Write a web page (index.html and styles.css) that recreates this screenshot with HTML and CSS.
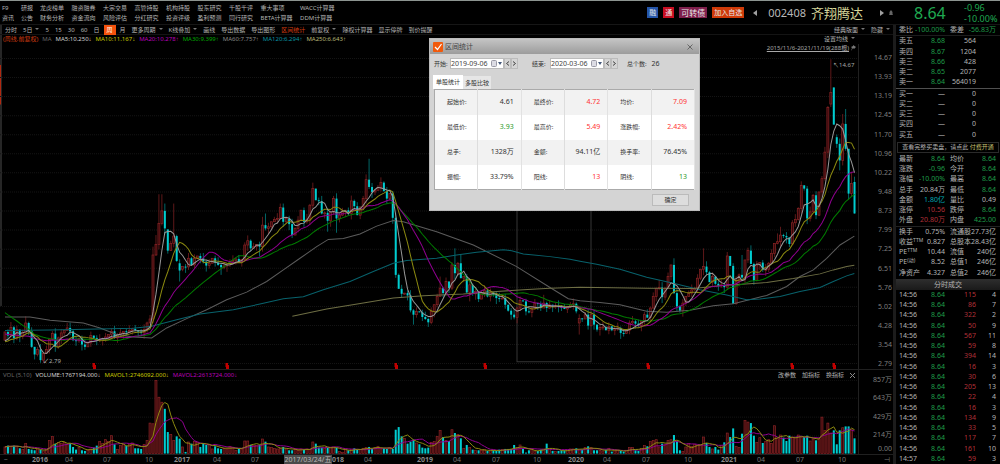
FILE: index.html
```html
<!DOCTYPE html>
<html lang="zh-CN">
<head>
<meta charset="utf-8">
<title>齐翔腾达 002408</title>
<link rel="stylesheet" href="styles.css">
</head>
<body>
<div class="app">
  <header class="header">
    <nav class="menu">
      <a href="#">F9</a><a href="#">研报</a><a href="#">龙虎榜单</a><a href="#">融资融券</a><a href="#">大宗交易</a><a href="#">高管持股</a><a href="#">机构持股</a><a href="#">股东研究</a><a href="#">千股千评</a><a href="#">重大事项</a><a href="#">WACC计算器</a>
      <a href="#">资讯</a><a href="#">公告</a><a href="#">财务分析</a><a href="#">资金流向</a><a href="#">风险评估</a><a href="#">分红研究</a><a href="#">投资评级</a><a href="#">盈利预测</a><a href="#">同行研究</a><a href="#">BETA计算器</a><a href="#">DDM计算器</a>
    </nav>
    <div class="stock">
      <span class="tag tag-blue">融</span>
      <span class="tag tag-red">通</span>
      <span class="tag tag-plum">可转债</span>
      <button class="tag tag-orange">加入自选</button>
      <button class="arrow" aria-label="上一只"><svg width="4" height="6" viewBox="0 0 4 6"><path d="M4 0v6L0 3z"/></svg></button>
      <span class="code">002408</span>
      <h1 class="name">齐翔腾达</h1>
      <button class="arrow next" aria-label="下一只"><svg width="4" height="6" viewBox="0 0 4 6"><path d="M0 0v6l4-3z"/></svg></button>
      <button class="arrow bell" aria-label="提醒"><svg width="4" height="6" viewBox="0 0 4 6"><path d="M2 0l1.5 2v2l.5 1H0l.5-1V2z"/></svg></button>
    </div>
    <div class="price">
      <strong class="last">8.64</strong>
      <span class="change"><span>-0.96</span><span>-10.00%</span></span>
    </div>
  </header>

  <main class="main">
    <div class="toolbar">
      <button>分时</button><button class="drop">5日</button><button>5</button><button>15</button><button>30</button><button>60</button><button>日</button><button class="active">周</button><button>月</button><button class="drop">更多周期</button><button class="drop">K线叠加</button><button>画线</button><button>导出数据</button><button>导出图形</button><button class="hot">区间统计</button><button class="drop">前复权</button><button>除权计算器</button><button>显示停牌</button><button>到价提醒</button>
      <span class="toolbar-end"><button class="drop">经典版面</button><button class="drop">隐藏</button></span>
    </div>
    <div class="panel">
      <div class="legend">
        <span class="c-hot">(周线,前复权)</span><span class="c-dim">MA</span><span class="c-white">MA5:10.250<i>↓</i></span><span class="c-yellow">MA10:11.167<i>↓</i></span><span class="c-magenta">MA20:10.278<i>↑</i></span><span class="c-green">MA30:9.399<i>↑</i></span><span class="c-grey">MA60:7.757<i>↑</i></span><span class="c-cyan">MA120:6.294<i>↑</i></span><span class="c-cream">MA250:6.643<i>↑</i></span>
        <button class="drop setting">设置均线</button>
      </div>
      <div class="plot price-plot">
        <svg class="canvas" id="price" viewBox="0 0 2574 981" preserveAspectRatio="none"></svg>
        <div class="axis price-axis">
          <span>14.67</span><span>13.93</span><span>13.19</span><span>12.45</span><span>11.70</span><span>10.96</span><span>10.22</span><span>9.48</span><span>8.73</span><span>7.99</span><span>7.25</span><span>6.51</span><span>5.76</span><span>5.02</span><span>4.28</span><span>3.54</span><span>2.79</span>
        </div>
        <svg class="notes" id="notes"></svg>
        <a class="period" href="#">2015/11/6-2021/11/19(288根)</a>
        <svg class="pin" width="5" height="6" viewBox="0 0 5 6"><path d="M2 0l3 2-1 1-1 1-1-1-2 3 1-3-1-1 2-1z"/></svg>
      </div>
      <div class="plot volume-plot">
        <div class="volume-area">
          <div class="legend volume-legend">
            <span class="c-dim">VOL (5,10)</span><span class="c-white">VOLUME:1767194.000<i>↓</i></span><span class="c-yellow">MAVOL1:2746092.000<i>↓</i></span><span class="c-magenta">MAVOL2:2613724.000<i>↓</i></span>
            <span class="indicator-actions"><button>改参数</button><button>加指标</button><button>换指标</button><button aria-label="关闭"><svg width="5" height="5" viewBox="0 0 5 5"><path d="M0 0l5 5M5 0L0 5"/></svg></button></span>
          </div>
          <svg class="canvas" id="volume" viewBox="0 0 2574 222" preserveAspectRatio="none"></svg>
        </div>
        <div class="axis volume-axis"><span>857万</span><span>643万</span><span>429万</span><span>214万</span><span>0.00</span></div>
      </div>
      <svg class="timeline" id="timeline"></svg>
    </div>
  </main>

  <aside class="side">
    <dl class="pairs r1">
      <div><dt>委比</dt><dd class="dn">-100.00%</dd></div><div><dt>委差</dt><dd class="dn">-56.83万</dd></div>
    </dl>
    <div class="book r5">
      <table>
        <tr><th>卖五</th><td class="dn">8.68</td><td>564</td></tr>
        <tr><th>卖四</th><td class="dn">8.67</td><td>1204</td></tr>
        <tr><th>卖三</th><td class="dn">8.66</td><td>428</td></tr>
        <tr><th>卖二</th><td class="dn">8.65</td><td>2077</td></tr>
        <tr><th>卖一</th><td class="dn">8.64</td><td>564019</td></tr>
      </table>
    </div>
    <div class="book buys r5">
      <table>
        <tr><th>买一</th><td>—</td><td>0</td></tr>
        <tr><th>买二</th><td>—</td><td>0</td></tr>
        <tr><th>买三</th><td>—</td><td>0</td></tr>
        <tr><th>买四</th><td>—</td><td>0</td></tr>
        <tr><th>买五</th><td>—</td><td>0</td></tr>
      </table>
    </div>
    <p class="promo">查看完整买卖盘，请点此 <a href="#">付费开通</a></p>
    <dl class="pairs r7">
      <div><dt>最新</dt><dd class="dn">8.64</dd></div><div><dt>均价</dt><dd class="dn">8.64</dd></div>
      <div><dt>涨跌</dt><dd class="dn">-0.96</dd></div><div><dt>今开</dt><dd class="dn">8.64</dd></div>
      <div><dt>涨幅</dt><dd class="dn">-10.00%</dd></div><div><dt>最高</dt><dd class="dn">8.64</dd></div>
      <div><dt>总手</dt><dd>20.84万</dd></div><div><dt>最低</dt><dd class="dn">8.64</dd></div>
      <div><dt>金额</dt><dd class="amount">1.80亿</dd></div><div><dt>量比</dt><dd>0.49</dd></div>
      <div><dt>涨停</dt><dd class="up">10.56</dd></div><div><dt>跌停</dt><dd class="dn">8.64</dd></div>
      <div><dt>外盘</dt><dd class="up">20.80万</dd></div><div><dt>内盘</dt><dd class="dn">425.00</dd></div>
    </dl>
    <dl class="pairs ruled r5">
      <div><dt>换手</dt><dd>0.75%</dd></div><div><dt>流通股</dt><dd>27.73亿</dd></div>
      <div><dt>收益<sup>TTM</sup></dt><dd>0.827</dd></div><div><dt>总股本</dt><dd>28.43亿</dd></div>
      <div><dt>PE<sup>TTM</sup></dt><dd>10.44</dd></div><div><dt>流值</dt><dd>240亿</dd></div>
      <div><dt>PE<sup>(动)</sup></dt><dd>8.52</dd></div><div><dt>总值1</dt><dd>246亿</dd></div>
      <div><dt>净资产</dt><dd>4.327</dd></div><div><dt>总值2</dt><dd>246亿</dd></div>
    </dl>
    <h2 class="side-title">分时成交</h2>
    <div class="book trades r17">
      <table>
        <tr><th>14:56</th><td class="dn">8.64</td><td class="up">115</td><td>4</td></tr>
        <tr><th>14:56</th><td class="dn">8.64</td><td class="up">86</td><td>7</td></tr>
        <tr><th>14:56</th><td class="dn">8.64</td><td class="up">322</td><td>2</td></tr>
        <tr><th>14:56</th><td class="dn">8.64</td><td class="up">50</td><td>9</td></tr>
        <tr><th>14:56</th><td class="dn">8.64</td><td class="up">567</td><td>11</td></tr>
        <tr><th>14:56</th><td class="dn">8.64</td><td class="up">59</td><td>8</td></tr>
        <tr><th>14:56</th><td class="dn">8.64</td><td class="up">394</td><td>14</td></tr>
        <tr><th>14:56</th><td class="dn">8.64</td><td class="up">16</td><td>3</td></tr>
        <tr><th>14:56</th><td class="dn">8.64</td><td class="up">30</td><td>6</td></tr>
        <tr><th>14:56</th><td class="dn">8.64</td><td class="up">205</td><td>13</td></tr>
        <tr><th>14:56</th><td class="dn">8.64</td><td class="up">22</td><td>4</td></tr>
        <tr><th>14:56</th><td class="dn">8.64</td><td class="up">16</td><td>3</td></tr>
        <tr><th>14:56</th><td class="dn">8.64</td><td class="up">134</td><td>9</td></tr>
        <tr><th>14:56</th><td class="dn">8.64</td><td class="up">33</td><td>5</td></tr>
        <tr><th>14:56</th><td class="dn">8.64</td><td class="up">117</td><td>7</td></tr>
        <tr><th>14:56</th><td class="dn">8.64</td><td class="up">161</td><td>10</td></tr>
        <tr><th>14:57</th><td class="dn">8.64</td><td class="up">59</td><td>3</td></tr>
      </table>
    </div>
  </aside>

  <section class="dialog" role="dialog" aria-labelledby="dialog-title">
    <div class="dialog-bar">
      <svg width="10" height="10" viewBox="0 0 10 10"><rect width="10" height="10" rx="1" fill="#f25a0c"/><path d="M2 5l2.500 2.500L8.500 2" fill="none" stroke="#fff" stroke-width="1.200"/></svg>
      <h2 id="dialog-title">区间统计</h2>
      <button class="close" aria-label="关闭"><svg width="6" height="6" viewBox="0 0 6 6"><path d="M.5 .5l5 5M5.500 .5l-5 5"/></svg></button>
    </div>
    <div class="range">
      <label for="from">开始:</label>
      <span class="date"><input id="from" value="2019-09-06"><svg width="11" height="7" viewBox="0 0 11 7"><rect x=".5" y=".5" width="5" height="6" rx="1" fill="#dcdce4" stroke="#9a9aa6"/><path d="M7 2h4L9 5z" fill="#44587a"/></svg></span>
      <button aria-label="前一周"><svg width="3" height="5" viewBox="0 0 3 5"><path d="M3 .5L.5 2.500 3 4.500"/></svg></button><button aria-label="后一周"><svg width="3" height="5" viewBox="0 0 3 5"><path d="M0 .5l2.500 2L0 4.500"/></svg></button>
      <label class="to" for="to">结束:</label>
      <span class="date"><input id="to" value="2020-03-06"><svg width="11" height="7" viewBox="0 0 11 7"><rect x=".5" y=".5" width="5" height="6" rx="1" fill="#dcdce4" stroke="#9a9aa6"/><path d="M7 2h4L9 5z" fill="#44587a"/></svg></span>
      <button aria-label="前一周"><svg width="3" height="5" viewBox="0 0 3 5"><path d="M3 .5L.5 2.500 3 4.500"/></svg></button><button aria-label="后一周"><svg width="3" height="5" viewBox="0 0 3 5"><path d="M0 .5l2.500 2L0 4.500"/></svg></button>
      <span class="count">总个数:</span><span>26</span>
    </div>
    <div class="tabs" role="tablist"><button role="tab" aria-selected="true">单股统计</button><button role="tab" aria-selected="false">多股比较</button></div>
    <table class="stats">
      <tr><th>起始价:</th><td>4.61</td><th>最终价:</th><td class="up">4.72</td><th>均价:</th><td class="up">7.09</td></tr>
      <tr><th>最低价:</th><td class="dn">3.93</td><th>最高价:</th><td class="up">5.49</td><th>涨跌幅:</th><td class="up">2.42%</td></tr>
      <tr><th>总手:</th><td>1328万</td><th>金额:</th><td>94.11亿</td><th>换手率:</th><td>76.45%</td></tr>
      <tr><th>振幅:</th><td>33.79%</td><th>阳线:</th><td class="up">13</td><th>阴线:</th><td class="dn">13</td></tr>
    </table>
    <div class="dialog-foot"><button>确定</button></div>
  </section>
</div>
<script src="chart.js"></script>
</body>
</html>
```

FILE: styles.css
```css
* { box-sizing: border-box; }
body {
  margin: 0;
  background: #000;
  color: #b4b4b4;
  font: 7px/10px "Noto Sans", "Noto Sans CJK SC", sans-serif;
}
button, input { font: inherit; color: inherit; background: none; border: 0; padding: 0; margin: 0; }
a { color: inherit; text-decoration: none; }
h1, h2, p, dl, dd { margin: 0; font-weight: 400; }
i { font-style: normal; font-family: "Liberation Sans", sans-serif; }
table { border-collapse: collapse; width: 100%; }
th { font-weight: 400; text-align: left; padding: 0; }
td { text-align: right; padding: 0; }
.dn { color: #1f9a48; }
.up { color: #b03038; }

.app {
  position: relative;
  display: grid;
  grid-template-columns: minmax(0, 1fr) 107px;
  grid-template-rows: 24px minmax(0, 1fr);
  height: 100vh;
  overflow: hidden;
  border-top: 1px solid #8c9490;
}

/* header */
.header {
  grid-column: 1 / -1;
  display: flex;
  align-items: center;
  border-bottom: 1px solid #161616;
  white-space: nowrap;
}
.menu {
  display: grid;
  grid-template-columns: 38fr 38fr repeat(7, 63fr) 79fr 76fr;
  width: 336px;
  margin-left: 2px;
  font-size: 6px;
}
.stock { display: flex; align-items: center; gap: 5px; margin-left: auto; }
.tag { height: 11px; padding: 0 2px; line-height: 11px; color: #e8e8e8; font-size: 7px; }
.tag-blue { background: #2555a8; }
.tag-red { background: #c80f22; }
.tag-plum { background: #7e1f4c; font-size: 8px; }
.tag-orange { background: #cf3a08; }
.arrow { display: flex; margin-left: 4px; }
.arrow path { fill: #a0a0a0; }
.code { margin-left: 6px; font-size: 11px; line-height: 16px; color: #b8b8b8; }
.name { font-size: 13px; line-height: 16px; color: #d6d69a; }
.next { margin-left: 12px; }
.bell { margin-left: 0; }
.bell path { fill: #666; }
.price { display: flex; align-items: center; justify-content: space-between; width: 107px; padding: 0 1px 0 21px; color: #1fa850; }
.last { font-size: 16px; line-height: 20px; font-weight: 400; }
.change { display: flex; flex-direction: column; font-size: 9px; line-height: 11px; width: 35px; }

/* toolbar */
.main {
  display: flex;
  flex-direction: column;
  min-width: 0;
  min-height: 0;
  background:
    linear-gradient(#b02810, #b02810) 0 10% / 1px 9% no-repeat,
    linear-gradient(#262626, #262626) 0 0 / 2px 64% no-repeat;
}
.toolbar {
  display: flex;
  align-items: center;
  gap: 6px;
  height: 10px;
  padding-left: 5px;
  font-size: 6px;
  white-space: nowrap;
  border-bottom: 1px solid #141414;
}
.drop::after {
  content: "";
  display: inline-block;
  margin-left: 3px;
  vertical-align: 2px;
  border: 2px solid transparent;
  border-top-color: #777;
  border-bottom: 0;
}
.toolbar .active { background: #f4520c; color: #fff; padding: 0 3px; margin: 0 -2px; }
.toolbar .hot, .c-hot { color: #d23c10; }
.toolbar-end { display: flex; gap: 6px; margin-left: auto; padding-right: 3px; }

/* charts */
.panel { display: flex; flex-direction: column; flex: 1; min-height: 0; }
.legend { display: flex; flex: none; gap: 4px; height: 9px; line-height: 9px; white-space: nowrap; padding-left: 3px; font-size: 6px; }
.c-dim { color: #666; }
.c-white { color: #d0d0d0; }
.c-yellow { color: #c8c800; }
.c-magenta { color: #b800b8; }
.c-green { color: #00a800; }
.c-grey { color: #8a8a8a; }
.c-cyan { color: #0a94a4; }
.c-cream { color: #b8b878; }
.setting { margin-left: auto; margin-right: 38px; }
.plot { display: grid; grid-template-columns: minmax(0, 1fr) 35px; position: relative; min-height: 0; }
.price-plot { flex: 327 1 0; border-bottom: 1px solid #202020; }
.volume-plot { flex: 84 1 0; grid-template-rows: minmax(0, 1fr); }
.canvas { display: block; width: 100%; height: 100%; min-height: 0; overflow: hidden; }
.axis { border-left: 1px solid #202020; padding-right: 1px; text-align: right; color: #7e7e7e; }
.price-axis { display: flex; flex-direction: column; justify-content: space-between; padding: 9px 1px 0 0; }
.volume-axis { display: grid; grid-template-rows: repeat(4, minmax(0, 2fr)) minmax(0, 1fr); align-items: center; }
.volume-area { display: flex; flex-direction: column; min-height: 0; }
.volume-area .canvas { flex: 1 1 0; height: 0; }
.volume-legend { height: 10px; line-height: 10px; }
.indicator-actions { display: flex; gap: 6px; margin-left: auto; padding-right: 3px; align-items: center; }
.indicator-actions path { stroke: #888; fill: none; }
.indicator-actions svg { display: block; }
.notes { position: absolute; inset: 0; width: 100%; height: 100%; }
.period { position: absolute; top: 0; right: 44px; font-size: 6px; line-height: 9px; text-decoration: underline; color: #a8a8a8; }
.pin { position: absolute; top: 1px; right: 37px; fill: #777; }
.timeline { flex: none; width: 100%; height: 10px; border-top: 1px solid #202020; }
.note { font-size: 6px; fill: #a8a8a8; }
.tick { font-size: 7px; fill: #777; text-anchor: middle; }
.tick.year { font-weight: 700; fill: #8a8a8a; }
.tick.cursor { font-weight: 400; fill: #b8b8b8; }
.cursor-box { fill: #4a4a4a; }
.marker { stroke: #c00000; stroke-width: 2; fill: none; }
.selection { fill: none; stroke: #363636; vector-effect: non-scaling-stroke; }
.grid-line { stroke: #141414; stroke-dasharray: 1 1; vector-effect: non-scaling-stroke; }
.rise { fill: #360a0c; stroke: #8e2426; stroke-width: 2; }
.fall { fill: #00cdd0; stroke: none; }
.wick-rise { stroke: #8e2426; stroke-width: 2; }
.wick-fall { stroke: #009a9c; stroke-width: 2; }
.line { fill: none; stroke-width: 1; vector-effect: non-scaling-stroke; }
.ma5 { stroke: #999; }
.ma10 { stroke: #8c8a10; }
.ma20 { stroke: #900090; }
.ma30 { stroke: #007c00; }
.ma60 { stroke: #5c5c5c; }
.ma120 { stroke: #08626c; }
.ma250 { stroke: #6e6e44; }

/* quote column */
.side { display: flex; flex-direction: column; min-height: 0; border-left: 3px solid #1c1c1c; white-space: nowrap; }
.pairs { display: grid; grid-template-columns: 46px 46px; justify-content: space-between; grid-auto-rows: 1fr; padding: 0 4px 0 3px; min-height: 0; }
.pairs > div { display: flex; justify-content: space-between; align-items: center; }
.r1 { flex: 1 1 0; border-bottom: 1px solid #1c1c1c; }
.r5 { flex: 5 1 0; }
.r7 { flex: 7 1 0; }
.r17 { flex: 17 1 0; }
.ruled { border-top: 1px solid #222; }
.amount { color: #00a8b4; }
sup { font-size: 5px; line-height: 5px; vertical-align: 2px; }
.book { min-height: 0; padding: 0 4px 0 3px; }
.book table { height: 100%; table-layout: fixed; }
.book th { width: 23px; }
.book td { width: 23px; }
.book td:nth-child(3) { width: 31px; }
.book td:nth-child(4) { width: 20px; }
.book:not(.trades) tr::after { content: ""; display: table-cell; width: 20px; }
.buys { border-top: 1px solid #505050; }
.promo { height: 11px; margin: 2px 1px 1px; border: 1px solid #2a2a2a; text-align: center; font-size: 6px; line-height: 9px; }
.promo a { color: #c8c070; }
.side-title { height: 11px; margin-top: 1px; line-height: 11px; font-size: 7px; text-align: center; background: linear-gradient(#2e2e2e, #1a1a1a); }

/* range statistics window */
.dialog {
  position: absolute;
  left: 429px;
  top: 37px;
  width: 271px;
  background: #d4d4d4;
  color: #333;
  border: 1px solid #bbb;
}
.dialog .up { color: #f33; }
.dialog .dn { color: #2a9a2a; }
.dialog-bar { display: flex; align-items: center; gap: 2px; height: 15px; padding: 0 6px 0 3px; background: linear-gradient(#c4c4c4, #9c9c9c); }
.dialog-bar h2 { font-size: 7px; color: #444; }
.close { display: flex; margin-left: auto; }
.close path { stroke: #666; }
.range { display: flex; align-items: center; height: 11px; margin: 4px 4px 6px; }
.range label { font-size: 6px; width: 16px; }
.range .to { width: 18px; margin-left: 14px; }
.date { display: flex; align-items: center; width: 54px; height: 11px; background: #fff; border: 1px solid #bbb; }
.date input { flex: 1; min-width: 0; height: 9px; color: #444; }
.date svg { flex: none; margin-right: 1px; }
.range button { display: flex; align-items: center; justify-content: center; width: 7px; height: 11px; border: 1px solid #bcbcbc; }
.range button path { fill: none; stroke: #444; }
.count { margin: 0 5px 0 9px; font-size: 6px; }
.tabs { display: flex; align-items: flex-end; height: 14px; padding-left: 3px; font-size: 6px; }
.tabs button { height: 13px; padding: 0 2px; background: #e6e6e6; }
.tabs button[aria-selected="true"] { height: 14px; padding: 0 3px; background: #fff; }
.stats { width: calc(100% - 8px); table-layout: fixed; margin: 0 4px; border: 1px solid #aaa; background: #fff; }
.stats tr { height: 25px; }
.stats tr:nth-child(odd) { background: #f2f2f2; }
.stats th { padding-left: 12px; font-size: 6px; border-right: 1px solid #ddd; }
.stats td { padding-right: 7px; border-right: 1px solid #e2e2e2; }
.dialog-foot { display: flex; justify-content: flex-end; padding: 4px 10px; }
.dialog-foot button { width: 37px; height: 12px; font-size: 6px; background: #ddd; border: 1px solid #bbb; }
```

FILE: chart.js
```js
// Weekly closes as plot levels (smaller is higher on the chart).
const closes = [
  547,558,533,566,540,560,548,520,545,592, 615,600,632,612,600,570,552,592,565,550,
  543,535,545,572,574,566,585,592,580,558, 565,572,570,568,562,555,545,565,555,550,
  545,548,543,538,542,546,550,540,520,508, 315,283,220,182,235,302,280,258,333,362,
  350,351,325,345,325,318,325,335,347,340, 325,338,345,352,348,342,336,332,327,335,
  328,285,272,295,290,283,290,225,235,230, 215,208,205,172,215,205,222,255,235,210,
  180,215,207,165,115,150,153,190,188,212, 185,145,205,195,185,180,190,152,168,195,
  170,145,88,110,125,120,112,97,122,145, 130,203,375,417,432,430,437,482,495,485,
  488,502,508,518,485,465,440,415,430,395, 415,345,370,340,385,380,428,405,432,425,
  448,430,422,440,428,435,445,448,445,465, 483,495,503,475,452,455,485,488,475,460,
  463,475,460,475,465,472,468,470,475,478, 470,465,462,485,506,508,495,528,495,525,
  540,533,532,542,530,542,538,535,550,552, 542,520,515,522,527,516,495,504,475,440,
  415,413,442,415,380,345,430,470,483,460, 440,430,420,415,385,358,350,367,397,380,
  402,408,405,412,318,348,462,395,375,383, 330,302,342,392,345,338,360,358,340,310,
  280,275,255,258,262,282,218,208,175,105, 115,205,185,135,195,125,85,5,-130,-175,
  -78,-20,30,-80,-5,130,100,190
];
const opens = { 0: 572, 59: 340, 60: 358, 55: 238, 194: 520, 279: -140, 280: -190, 281: -40, 287: 95 };
const highs = { 7: 500, 21: 520, 50: 290, 51: 255, 52: 132, 53: 132, 54: 160, 57: 160, 87: 200, 88: 190,
  93: 160, 104: 97, 123: 25, 147: 380, 152: 295, 154: 312, 182: 435, 221: 390, 226: 325, 236: 295, 249: 315,
  251: 293, 261: 250, 262: 230, 279: -275, 283: -110, 284: -125, 286: 65 };
const lows = { 12: 640, 59: 395, 73: 375, 86: 320, 109: 245, 112: 248, 138: 525, 143: 532, 157: 455, 194: 555,
  246: 463, 253: 405, 271: 222, 282: 60 };
const volumes = [
  20,24,22,24,22,16,12,30,14,12, 10,12,12,8,12,40,52,30,33,30, 34,28,32,20,12,18,10,8,10,14,
  18,24,36,30,42,36,54,28,12,24, 28,24,28,32,16,16,14,28,40,92, 90,220,170,155,135,65,58,40,52,45,
  20,5,35,30,36,34,20,32,26,28, 14,22,16,14,16,14,22,18,10,14, 14,38,38,26,24,24,26,44,36,20,
  18,16,14,16,20,14,10,10,12,10, 14,12,14,12,35,30,18,18,16,18, 18,20,18,6,4,14,10,12,16,12,
  12,16,18,20,14,18,22,14,16,14, 18,14,72,80,52,46,30,36,42,32, 28,18,16,18,34,36,52,70,50,40,
  38,72,62,58,46,16,26,18,12,10, 10,10,12,8,8,10,8,12,12,14, 14,14,26,18,26,14,3,10,12,8,
  8,12,14,30,14,8,6,8,10,10, 10,14,14,16,12,12,18,22,18,10, 10,10,8,12,16,6,8,10,8,6,
  10,18,18,10,8,16,24,22,36,40, 42,20,30,26,40,42,56,38,10,6, 20,30,22,28,24,26,50,32,20,14,
  20,12,24,34,62,50,76,22,18,60, 100,95,92,54,34,48,32,36,42,30, 84,46,56,48,38,54,50,48,56,48,
  50,54,38,44,40,44,110,70,92,62, 70,28,70,78,82,82,72,46
];
const history = [...Array(10).fill(360), ...Array(10).fill(530), ...Array(9).fill(580)];
const ma60 = [15,502,90,502,150,512,250,520,300,535,350,555,400,562,455,565,500,535,560,507,620,480,680,450,740,427,
  800,395,850,360,900,325,950,290,985,268,1030,265,1080,252,1130,228,1180,211,1210,215,1310,245,1420,285,1550,350,
  1650,413,1705,447,1740,453,1800,458,1860,465,1940,485,2000,488,2070,482,2140,468,2200,462,2260,447,2300,437,
  2360,410,2400,380,2440,360,2480,325,2520,285,2563,258];
const ma120 = [15,543,150,541,400,536,455,530,530,510,600,493,700,480,780,463,850,447,910,441,970,420,1050,395,
  1120,365,1180,340,1220,332,1310,325,1370,315,1430,307,1510,299,1535,302,1570,312,1650,320,1710,328,1740,334,
  1790,343,1860,358,1940,382,2020,400,2100,420,2180,436,2240,450,2280,448,2340,440,2400,425,2460,413,2500,395,
  2540,378,2563,371];
const ma250 = [877,500,980,478,1090,460,1180,445,1270,438,1390,433,1490,425,1570,420,1650,415,1740,412,1940,415,
  2080,416,2160,408,2300,398,2380,386,2460,372,2500,360,2540,350,2563,346];

const X = i => 15 + 8.88 * i;
const SHIFT = 321;
const NS = 'http://www.w3.org/2000/svg';
function add(parent, tag, attrs, text) {
  const node = document.createElementNS(NS, tag);
  for (const key in attrs) node.setAttribute(key, attrs[key]);
  if (text) node.textContent = text;
  parent.appendChild(node);
  return node;
}
function average(values, n, lead) {
  const all = lead.concat(values);
  return values.map((_, i) => {
    const end = i + lead.length + 1;
    const part = all.slice(Math.max(0, end - n), end);
    return part.reduce((a, b) => a + b, 0) / part.length;
  });
}
function curve(svg, name, points) {
  add(svg, 'polyline', { class: 'line ' + name, points: points.join(' ') });
}

const price = document.getElementById('price');
for (let k = 0; k < 17; k++) {
  const y = 43.5 + k * 57.5;
  add(price, 'line', { class: 'grid-line', x1: 0, x2: 2574, y1: y, y2: y });
}
add(price, 'rect', { class: 'selection', x: 1551, y: 480, width: 222, height: 478 });
closes.forEach((close, i) => {
  const open = opens[i] ?? (i ? closes[i - 1] : close);
  const rise = close < open;
  const top = Math.min(open, close), bottom = Math.max(open, close);
  const high = highs[i] ?? top - (i * 7 % 5) * 4;
  const low = lows[i] ?? bottom + (i * 11 % 7) * 3;
  const x = X(i);
  add(price, 'line', { class: rise ? 'wick-rise' : 'wick-fall', x1: x, x2: x, y1: high + SHIFT, y2: low + SHIFT });
  add(price, 'rect', { class: rise ? 'rise' : 'fall', x: x - 3, y: top + SHIFT, width: 6, height: Math.max(3, bottom - top) });
});
[[60, ma60], [120, ma120], [250, ma250]].forEach(([n, points]) =>
  curve(price, 'ma' + n, points.map((v, i) => i % 2 ? v + SHIFT : v)));
[30, 20, 10, 5].forEach(n =>
  curve(price, 'ma' + n, average(closes, n, history).map((v, i) => [X(i), v + SHIFT])));

const volume = document.getElementById('volume');
[0, 54, 111, 168].forEach(y => add(volume, 'line', { class: 'grid-line', x1: 0, x2: 2574, y1: y + 1, y2: y + 1 }));
volumes.forEach((v, i) => {
  const rise = i === 0 || closes[i] < (opens[i] ?? closes[i - 1]);
  add(volume, 'rect', { class: rise ? 'rise' : 'fall', x: X(i) - 3, y: 222 - v, width: 6, height: v });
});
curve(volume, 'ma20', average(volumes, 10, []).map((v, i) => [X(i), 222 - v]));
curve(volume, 'ma10', average(volumes, 5, []).map((v, i) => [X(i), 222 - v]));

const percent = x => x / 893 * 100 + '%';
const notes = document.getElementById('notes');
[94, 227, 396, 485, 648, 792, 834].forEach(x => {
  const holder = add(notes, 'svg', { x: percent(x - 2), y: '98%', width: 4, height: 6, viewBox: '0 0 4 6' });
  add(holder, 'path', { class: 'marker', d: 'M3 1H1.500V3H3V5H1' });
});
add(notes, 'text', { class: 'note', x: percent(833), y: '7%' }, '↖14.67');
add(notes, 'text', { class: 'note', x: percent(43), y: '98%' }, '↙2.79');

const timeline = document.getElementById('timeline');
[[6, '−'], [40, '2016'], [69, '04'], [107, '07'], [149, '10'], [182, '2017'], [217, '04'], [255, '07'], [338, '018'],
  [368, '04'], [425, '2019'], [457, '04'], [496, '07'], [537, '10'], [576, '2020'], [607, '04'], [646, '07'],
  [688, '10'], [729, '2021'], [761, '04'], [800, '07'], [842, '10'], [887, '⊣']].forEach(([x, label]) =>
  add(timeline, 'text', { class: 'tick' + (label.length > 2 ? ' year' : ''), x: percent(x), y: 7 }, label));
add(timeline, 'rect', { class: 'cursor-box', x: percent(284), y: 0, width: 48, height: 9 });
add(timeline, 'text', { class: 'tick cursor', x: percent(308), y: 7 }, '2017/03/24/五');
```
